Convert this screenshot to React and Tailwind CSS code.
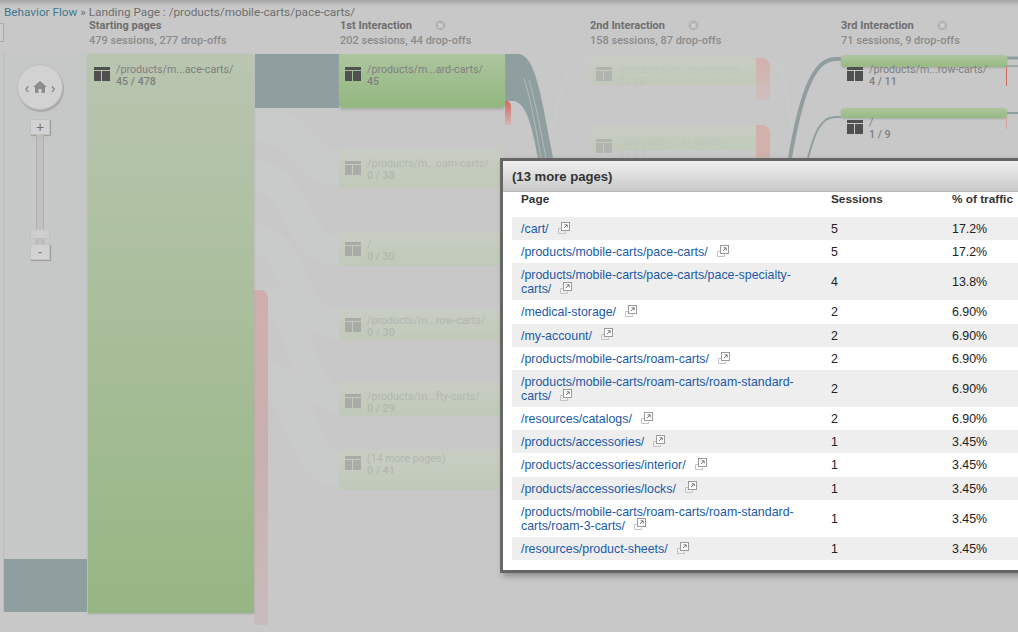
import React from "react";

const roboto = "font-['Roboto',sans-serif]";
const arial = "font-['Liberation_Sans',Arial,sans-serif]";

const columns = [
  { width: "w-[251px]", titleWidth: "w-[95px]", title: "Starting pages", stats: "479 sessions, 277 drop-offs" },
  { width: "w-[250px]", titleWidth: "w-[95px]", title: "1st Interaction", stats: "202 sessions, 44 drop-offs", close: true },
  { width: "w-[251px]", titleWidth: "w-[98px]", title: "2nd Interaction", stats: "158 sessions, 87 drop-offs", close: true },
  { width: "w-[177px]", titleWidth: "w-[96px]", title: "3rd Interaction", stats: "71 sessions, 9 drop-offs", close: true },
];

const fadedNodes = [
  { box: "left-[339px] top-[148px] w-[162px] h-[40px]", text: "left-[339px] top-[148px] w-[162px]", label: "/products/m...oam-carts/", count: "0 / 38" },
  { box: "left-[339px] top-[232px] w-[162px] h-[34px]", text: "left-[339px] top-[229px] w-[162px]", label: "/", count: "0 / 30" },
  { box: "left-[339px] top-[308px] w-[162px] h-[32px]", text: "left-[339px] top-[305px] w-[162px]", label: "/products/m...row-carts/", count: "0 / 30" },
  { box: "left-[339px] top-[382px] w-[162px] h-[34px]", text: "left-[339px] top-[381px] w-[162px]", label: "/products/m...fty-carts/", count: "0 / 29" },
  { box: "left-[339px] top-[450px] w-[162px] h-[40px]", text: "left-[339px] top-[443px] w-[162px]", label: "(14 more pages)", count: "0 / 41" },
  { box: "left-[590px] top-[56px] w-[166px] h-[29px]", text: "left-[590px] top-[54px] w-[166px]", label: "/products/m...oam-carts/", count: "0 / 26", faint: true },
  { box: "left-[590px] top-[126px] w-[166px] h-[24px]", text: "left-[590px] top-[126px] w-[166px]", label: "/sas-pace-c...in-action/", count: "0 / 21", faint: true },
];

const rows = [
  ["/cart/", "5", "17.2%"],
  ["/products/mobile-carts/pace-carts/", "5", "17.2%"],
  ["/products/mobile-carts/pace-carts/pace-specialty-carts/", "4", "13.8%", true],
  ["/medical-storage/", "2", "6.90%"],
  ["/my-account/", "2", "6.90%"],
  ["/products/mobile-carts/roam-carts/", "2", "6.90%"],
  ["/products/mobile-carts/roam-carts/roam-standard-carts/", "2", "6.90%", true],
  ["/resources/catalogs/", "2", "6.90%"],
  ["/products/accessories/", "1", "3.45%"],
  ["/products/accessories/interior/", "1", "3.45%"],
  ["/products/accessories/locks/", "1", "3.45%"],
  ["/products/mobile-carts/roam-carts/roam-standard-carts/roam-3-carts/", "1", "3.45%", true],
  ["/resources/product-sheets/", "1", "3.45%"],
];

const PageIcon = ({ className = "" }) => (
  <svg viewBox="0 0 16 14" width="16" height="14" className={className}>
    <path fill="currentColor" d="M0 0h16v3H0zM0 4h7v10H0zM8 4h8v10H8z" />
  </svg>
);

const CloseDot = () => (
  <svg viewBox="0 0 11 11" width="11" height="11" className="mt-[1px]">
    <circle cx="5.5" cy="5.5" r="5" fill="#b4b4b4" />
    <path d="M3.5 3.5l4 4M7.5 3.5l-4 4" stroke="#d6d6d6" strokeWidth="1.6" />
  </svg>
);

const ExternalIcon = () => (
  <svg viewBox="0 0 12 12" width="12" height="12" className="inline-block ml-[9px] relative top-[-2px]">
    <path d="M0.5 6.5h3M0.5 6.5v5h7v-2" fill="none" stroke="#c4c4c4" />
    <rect x="3.5" y="0.5" width="8" height="8" fill="#fff" stroke="#9a9a9a" />
    <path d="M6 6l3-3M6.6 2.8h2.6v2.6" fill="none" stroke="#777" />
  </svg>
);

function FlowLinks() {
  return (
    <svg viewBox="0 0 1018 632" width="1018" height="632" className="absolute inset-0">
      {/* faded links */}
      <g fill="none" stroke="#cdcfcf" opacity="0.3">
        <path d="M254 125C310 125 300 168 340 168" strokeWidth="34" />
        <path d="M254 175C300 175 290 250 340 250" strokeWidth="30" />
        <path d="M254 240C300 240 285 324 340 324" strokeWidth="30" />
        <path d="M268 300C300 300 300 400 340 400" strokeWidth="28" />
        <path d="M268 380C300 380 300 470 340 470" strokeWidth="34" />
        <path d="M552 130C560 90 565 58 590 58" strokeWidth="3" />
        <path d="M770 60C785 60 790 110 795 158" strokeWidth="3" />
      </g>
      {/* active links */}
      <rect x="255" y="54" width="84" height="54" fill="#8f9e9e" />
      <rect x="4" y="559" width="83" height="53" fill="#8f9e9e" />
      <path fill="#8f9e9e" d="M505 54H518C530 54 537 76 543 106L553 158H538C532 128 527 101 512 101H505Z" />
      <g fill="none" stroke="#b4bcbc" strokeWidth="1">
        <path d="M524 78C531 100 536 130 541 158" />
        <path d="M529 80C536 104 541 132 546 158" />
      </g>
      <g fill="none" stroke="#8f9e9e">
        <path d="M790 158C800 100 812 59 835 59H841" strokeWidth="4" />
        <path d="M808 158C814 135 820 117 835 117H841" strokeWidth="2" />
        <path d="M1006 58H1018" strokeWidth="3" />
        <path d="M1006 66H1018" strokeWidth="1.5" />
        <path d="M1006 113H1018" strokeWidth="2" />
      </g>
      <rect x="1006" y="66" width="1" height="20" fill="#d0685e" />
      <rect x="1006" y="117" width="1" height="12" fill="#d8a09a" />
    </svg>
  );
}

function FlowNode({ pos, label, count, faded, faint }) {
  const textColor = faint ? "text-[#c0c5bb]" : faded ? "text-[#b3b7b0]" : "text-[#7f7f7f]";
  const iconColor = faint ? "text-[#b0b3ae]" : faded ? "text-[#a8aba6]" : "text-[#505050]";
  return (
    <div className={`absolute ${pos} ${roboto} text-[10.7px] leading-[12px]`}>
      <div className={`flex gap-[6px] pl-[6px] pt-[10px] ${textColor}`}>
        <PageIcon className={`mt-[3px] shrink-0 ${iconColor}`} />
        <div>
          <div>{label}</div>
          <div className="font-medium">{count}</div>
        </div>
      </div>
    </div>
  );
}

function ZoomControls() {
  return (
    <div className="absolute left-[16px] top-[64px] w-[48px] flex flex-col items-center">
      <div className="w-[46px] h-[46px] rounded-full bg-[#d2d2d2] border border-[#bdbdbd] shadow-[1px_2px_1px_#a8a8a8] flex items-center justify-center gap-[4px] text-[#7c7c7c] text-[14px]">
        <span>‹</span>
        <svg viewBox="0 0 14 12" width="14" height="12">
          <path fill="#8c8c8c" d="M7 0L0 6h2v6h3.5V8h3v4H12V6h2z" />
        </svg>
        <span>›</span>
      </div>
      <div className={`mt-[9px] w-[20px] h-[16px] bg-[#d2d2d2] border border-[#c0c0c0] shadow-[1px_1px_1px_#a0a0a0] flex items-center justify-center text-[14px] text-[#707070] ${arial}`}>+</div>
      <div className="w-[8px] h-[94px] bg-[#c0c0c0] border-x border-[#b0b0b0]" />
      <div className="w-[20px] h-[10px] bg-[#cecece] border border-[#c0c0c0]" />
      <div className="w-[8px] h-[5px] bg-[#c0c0c0] border-x border-[#b0b0b0]" />
      <div className={`w-[20px] h-[16px] bg-[#d2d2d2] border border-[#c0c0c0] shadow-[1px_1px_1px_#a0a0a0] flex items-center justify-center text-[12px] text-[#707070] ${arial}`}>-</div>
    </div>
  );
}

function PagesPopup() {
  return (
    <div className={`absolute left-[500px] top-[158px] w-[560px] h-[415px] border-[3px] border-[#666666] bg-white shadow-[3px_3px_6px_#8a8a8a] ${arial}`}>
      <div className="h-[31px] bg-gradient-to-b from-[#f0f0f0] to-[#c9c9c9] border-b border-[#bbbbbb] pl-[9px] pt-[2px] flex items-center text-[13.1px] font-bold text-[#333333]">
        (13 more pages)
      </div>
      <table className="ml-[9px] w-[548px] table-fixed border-collapse text-[12.4px] leading-[14px]">
        <colgroup>
          <col className="w-[319px]" />
          <col className="w-[121px]" />
          <col />
        </colgroup>
        <thead>
          <tr className="h-[25px] text-[11.8px] text-[#333333] text-left align-top">
            <th className="pl-[9px] font-bold">Page</th>
            <th className="font-bold">Sessions</th>
            <th className="font-bold">% of traffic</th>
          </tr>
        </thead>
        <tbody>
          {rows.map(([page, sessions, share, tall], i) => (
            <tr key={page} className={`${tall ? "h-[37px]" : "h-[23.2px]"} ${i % 2 === 0 ? "bg-[#eeeeee]" : "bg-white"}`}>
              <td className="pl-[9px] pr-[18px] pt-[1px] text-[#1a5aa8]">
                {page}
                <ExternalIcon />
              </td>
              <td className="pt-[1px] text-[#222222]">{sessions}</td>
              <td className="pt-[1px] text-[#222222]">{share}</td>
            </tr>
          ))}
        </tbody>
      </table>
    </div>
  );
}

export default function App() {
  return (
    <div className="relative w-[1018px] h-[632px] overflow-hidden bg-[#c8c8c8]">
      <div className="absolute left-[3px] top-[52px] bottom-[20px] w-[85px] bg-[#c6c8c8] border-l border-[#bcc0c0]" />
      <div className="absolute left-0 top-[23px] w-[4px] h-[19px] bg-[#cccccc] border border-l-0 border-[#aaaaaa]" />
      <FlowLinks />

      {/* red drop-offs */}
      <div className="absolute left-[254px] top-[290px] w-[14px] h-[335px] rounded-tr-[8px] bg-gradient-to-b from-[#d0aeae] via-[#c8b0b0] to-[#c8bcbc]" />
      <div className="absolute left-[505px] top-[101px] w-[6px] h-[24px] rounded-tr-[5px] bg-gradient-to-b from-[#d0685e] to-[#d0b8b6]" />
      <div className="absolute left-[756px] top-[58px] w-[14px] h-[42px] rounded-tr-[8px] bg-gradient-to-b from-[#d2b0ab] to-[#cfc0bd]" />
      <div className="absolute left-[756px] top-[125px] w-[14px] h-[33px] rounded-tr-[8px] bg-[#d2b0ab]" />

      {/* green nodes */}
      <div className="absolute left-[88px] top-[54px] w-[166px] h-[559px] bg-gradient-to-b from-[#b9c5b0] to-[#97b683] shadow-[0_1px_2px_#a8a8a8]" />
      <div className="absolute left-[339px] top-[54px] w-[166px] h-[54px] rounded-b-[4px] bg-gradient-to-b from-[#aec59e] to-[#93b77f] shadow-[0_2px_2px_#b0b0b0]" />
      <div className="absolute left-[841px] top-[55px] w-[166px] h-[12px] rounded-[3px] bg-gradient-to-b from-[#aec59e] to-[#97ba83] shadow-[0_1px_2px_#a8a8a8]" />
      <div className="absolute left-[841px] top-[108px] w-[166px] h-[10px] rounded-[3px] bg-gradient-to-b from-[#aec59e] to-[#97ba83] shadow-[0_1px_2px_#a8a8a8]" />
      {fadedNodes.map((n) => (
        <div key={n.box} className={`absolute ${n.box} rounded-b-[3px] bg-gradient-to-b from-[#c8cdc3] to-[#c0cab9]`} />
      ))}

      {/* node labels */}
      <FlowNode pos="left-[88px] top-[54px] w-[166px]" label="/products/m...ace-carts/" count="45 / 478" />
      <FlowNode pos="left-[339px] top-[54px] w-[166px]" label="/products/m...ard-carts/" count="45" />
      <FlowNode pos="left-[841px] top-[54px] w-[166px]" label="/products/m...row-carts/" count="4 / 11" />
      <FlowNode pos="left-[841px] top-[107px] w-[166px]" label="/" count="1 / 9" />
      {fadedNodes.map((n) => (
        <FlowNode key={n.box} pos={n.text} label={n.label} count={n.count} faded faint={n.faint} />
      ))}

      {/* page heading and column headers */}
      <div className="absolute inset-x-0 top-0 h-[6px] bg-gradient-to-b from-[#a4a4a4] to-[#c8c8c8]" />
      <div className={`relative pl-[4px] pt-[6px] text-[11.75px] leading-[13px] text-[#6e6e6e] ${roboto}`}>
        <span className="text-[#41798f]">Behavior Flow</span> » Landing Page : /products/mobile-carts/pace-carts/
      </div>
      <div className={`relative flex pl-[89px] ${roboto} text-[11px] leading-[14px]`}>
        {columns.map((c) => (
          <div key={c.title} className={`${c.width} shrink-0`}>
            <div className="flex">
              <div className={`${c.titleWidth} font-bold text-[#6e6e6e]`}>{c.title}</div>
              {c.close && <CloseDot />}
            </div>
            <div className="mt-[1px] font-medium text-[#8b8b8b]">{c.stats}</div>
          </div>
        ))}
      </div>

      <ZoomControls />
      <PagesPopup />
    </div>
  );
}
